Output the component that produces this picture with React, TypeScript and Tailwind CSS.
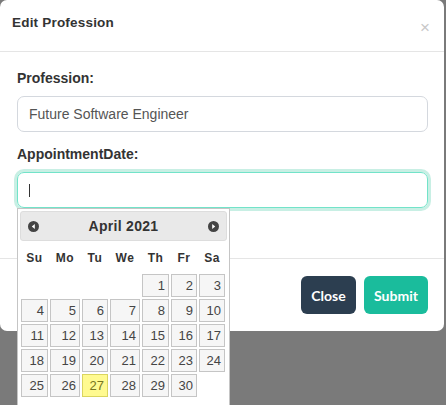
import React from "react";

const cols = "grid grid-cols-[27px_30px_26px_30px_27px_26px_26px] gap-x-[2px]";

function Arrow({ dir }: { dir: "l" | "r" }) {
  return (
    <svg width="11" height="11" viewBox="0 0 11 11">
      <circle cx="5.5" cy="5.5" r="5.5" fill="#444" />
      {dir === "l" ? (
        <path d="M6.8 3 L3.8 5.5 L6.8 8 Z" fill="#fff" />
      ) : (
        <path d="M4.2 3 L7.2 5.5 L4.2 8 Z" fill="#fff" />
      )}
    </svg>
  );
}

export default function App() {
  const days: (number | null)[] = [
    null, null, null, null, 1, 2, 3,
    4, 5, 6, 7, 8, 9, 10,
    11, 12, 13, 14, 15, 16, 17,
    18, 19, 20, 21, 22, 23, 24,
    25, 26, 27, 28, 29, 30, null,
  ];
  const names = ["Su", "Mo", "Tu", "We", "Th", "Fr", "Sa"];
  return (
    <div
      className="relative w-[446px] h-[405px] overflow-hidden bg-[#7a7a7a]"
      style={{ fontFamily: '"Liberation Sans", Arial, sans-serif' }}
    >
      <div className="absolute left-0 top-0 w-[444px] bg-white rounded-[7px] flex flex-col">
        <div className="h-[52px] border-b border-[#e5e5e5] flex items-center justify-between pl-[12px] pr-[14px]">
          <div className="text-[13.5px] font-bold text-[#333] tracking-[0.2px] -mt-[4px]">Edit Profession</div>
          <div className="text-[#c8c8c8] text-[17px] leading-none mt-[4px]">×</div>
        </div>
        <div className="pl-[17px] pr-[16px] pt-[16px] pb-[50px] flex flex-col">
          <label className="text-[14px] leading-[20px] font-bold text-[#333] mb-[8px]">Profession:</label>
          <div className="h-[36px] border border-[#d4d8de] rounded-[7px] flex items-center pl-[11px] text-[14px] text-[#555]">
            Future Software Engineer
          </div>
          <label className="text-[14px] leading-[20px] font-bold text-[#333] mt-[12px] mb-[8px]">AppointmentDate:</label>
          <div className="h-[36px] border-[1.5px] border-[#72e3c9] rounded-[7px] flex items-center pl-[11px] shadow-[0_0_0_3px_#c8efe4]">
            <div className="w-[1px] h-[13px] bg-[#333]" />
          </div>
        </div>
        <div className="border-t border-[#e5e5e5] h-[73px] flex items-center justify-end gap-[8px] pr-[16px]">
          <button
            className="h-[38px] w-[55px] rounded-[6px] bg-[#2c3e50] text-white text-[14px] font-bold"
            style={{ fontFamily: "Lato, sans-serif" }}
          >
            Close
          </button>
          <button
            className="h-[38px] w-[64px] rounded-[6px] bg-[#1abc9c] text-white text-[14px] font-bold"
            style={{ fontFamily: "Lato, sans-serif" }}
          >
            Submit
          </button>
        </div>
      </div>

      <div className="absolute left-[17px] top-[208px] w-[213px] h-[200px] bg-white border border-[#c5c5c5] p-[2px]">
        <div className="h-[30px] bg-[#e9e9e9] border border-[#dddddd] rounded-[3px] flex items-center justify-between px-[7px]">
          <Arrow dir="l" />
          <div className="text-[14px] font-bold text-[#333] tracking-[0.3px]">April 2021</div>
          <Arrow dir="r" />
        </div>
        <div className="px-[1px]">
          <div className={`${cols} h-[33px] items-center`}>
            {names.map((n) => (
              <div key={n} className="text-center text-[12px] font-bold text-[#333] tracking-[0.5px]">
                {n}
              </div>
            ))}
          </div>
          <div className={`${cols} gap-y-[2px]`}>
            {days.map((d, i) =>
              d === null ? (
                <div key={i} className="h-[23px]" />
              ) : (
                <div
                  key={i}
                  className={
                    d === 27
                      ? "h-[23px] border border-[#dad55e] bg-[#fffa90] text-[#777620] text-[13px] flex items-center justify-end pr-[3px]"
                      : "h-[23px] border border-[#c5c5c5] bg-[#f6f6f6] text-[#454545] text-[13px] flex items-center justify-end pr-[3px]"
                  }
                >
                  {d}
                </div>
              )
            )}
          </div>
        </div>
      </div>
    </div>
  );
}
